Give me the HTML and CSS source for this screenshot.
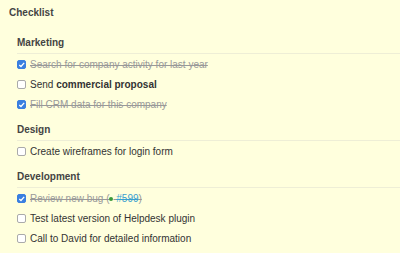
FILE: index.html
```html
<!DOCTYPE html>
<html>
<head>
  <meta charset="UTF-8">
  <title>Checklist</title>
  <link rel="stylesheet" href="styles.css">
</head>
<body>
<div class="checklist">
  <h3 class="title">Checklist</h3>

  <div class="group">
    <h4 class="group-title">Marketing</h4>
    <ul class="items">
      <li class="item done"><span class="box"></span><span class="label">Search for company activity for last year</span></li>
      <li class="item"><span class="box"></span><span class="label">Send <b>commercial proposal</b></span></li>
      <li class="item done"><span class="box"></span><span class="label">Fill CRM data for this company</span></li>
    </ul>
  </div>

  <div class="group">
    <h4 class="group-title">Design</h4>
    <ul class="items">
      <li class="item"><span class="box"></span><span class="label">Create wireframes for login form</span></li>
    </ul>
  </div>

  <div class="group">
    <h4 class="group-title">Development</h4>
    <ul class="items">
      <li class="item done"><span class="box"></span><span class="label">Review new bug (<span class="dot"></span> <a class="issue" href="#">#599</a>)</span></li>
      <li class="item"><span class="box"></span><span class="label">Test latest version of Helpdesk plugin</span></li>
      <li class="item"><span class="box"></span><span class="label">Call to David for detailed information</span></li>
    </ul>
  </div>
</div>
</body>
</html>
```

FILE: styles.css
```css
html, body {
  margin: 0;
  padding: 0;
  background: #ffffdd;
  font-family: "Liberation Sans", Arial, sans-serif;
  font-size: 10px;
  color: #333;
}

.checklist {
  padding: 6px 0 0 9px;
}

.title {
  margin: 0 0 16px;
  font-size: 10px;
  font-weight: bold;
  line-height: 14px;
  color: #444;
}

.group {
  padding-left: 8px;
  margin-bottom: 9px;
}

.group-title {
  margin: 0;
  font-size: 10px;
  font-weight: bold;
  line-height: 14px;
  padding-bottom: 3px;
  border-bottom: 1px solid #eeeed6;
  color: #444;
}

.items {
  list-style: none;
  margin: 0;
  padding: 0;
}

.item {
  display: flex;
  align-items: center;
  gap: 4px;
  height: 20px;
}

.box {
  box-sizing: border-box;
  width: 9px;
  height: 9px;
  border: 1px solid #aaa;
  border-radius: 2px;
  background: #fff;
  flex: none;
}

.done .box {
  border-color: #3a7fe0;
  background: #3a7fe0 url("data:image/svg+xml,%3Csvg xmlns='http://www.w3.org/2000/svg' viewBox='0 0 8 8'%3E%3Cpath d='M1.7 4.2 3.3 5.7 6.3 2.3' fill='none' stroke='white' stroke-width='1.2'/%3E%3C/svg%3E") center/8px no-repeat;
}

.label {
  white-space: nowrap;
}

.done .label {
  color: #999;
  text-decoration: line-through;
}

.dot {
  display: inline-block;
  width: 4px;
  height: 4px;
  border-radius: 50%;
  background: #3a9a3a;
  vertical-align: middle;
}

.issue {
  color: #3aa0d0;
  text-decoration: line-through;
}
```
